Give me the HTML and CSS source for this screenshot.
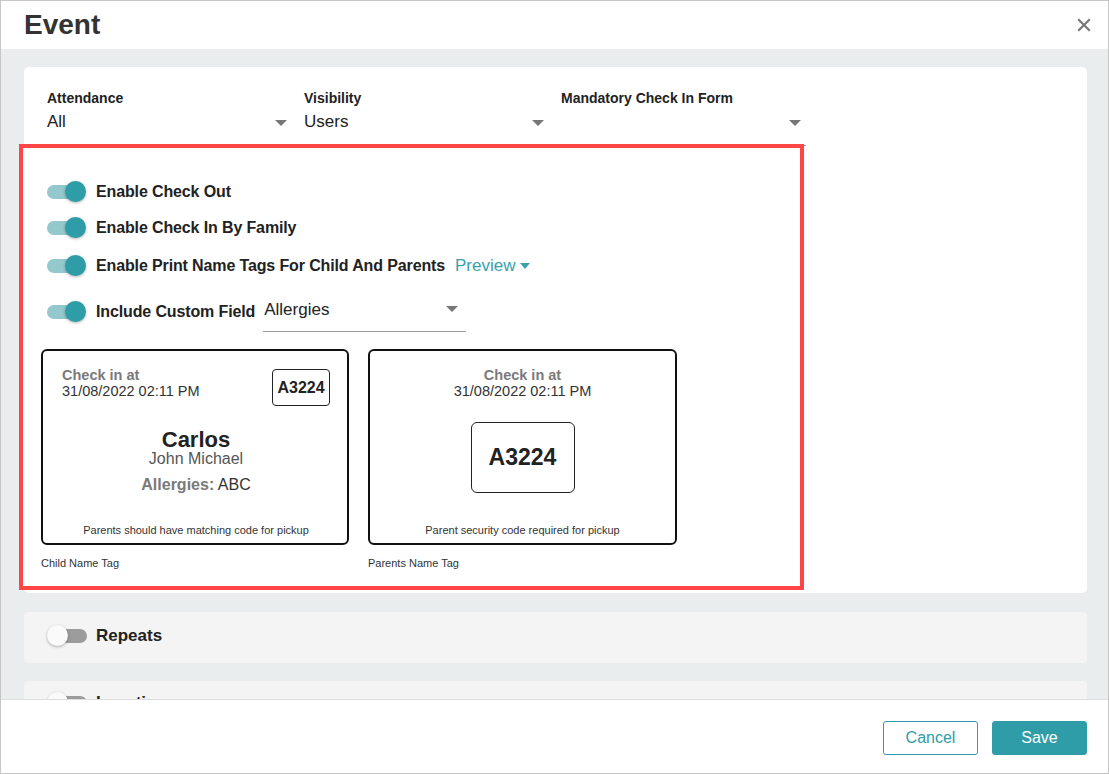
FILE: index.html
```html
<!DOCTYPE html>
<html lang="en">
	<head>
		<meta charset="utf-8"/>
		<title>Event</title>
		<link rel="stylesheet" href="styles.css">
	</head>
	<body>
		<div class="modal">
			<div class="modal-head">
				<h1>Event</h1>
				<svg class="close" width="14" height="14" viewBox="0 0 14 14"><path d="M2 2 L12 12 M12 2 L2 12" stroke="#777" stroke-width="2.2" stroke-linecap="square"/></svg>
			</div>
			<div class="modal-body">
				<div class="card">
					<div class="selects">
						<div class="select">
							<div class="select-label">Attendance</div>
							<div class="select-value">All</div>
							<span class="arrow"></span>
						</div>
						<div class="select">
							<div class="select-label">Visibility</div>
							<div class="select-value">Users</div>
							<span class="arrow"></span>
						</div>
						<div class="select">
							<div class="select-label">Mandatory Check In Form</div>
							<div class="select-value">&nbsp;</div>
							<span class="arrow"></span>
						</div>
					</div>
					<div class="highlight">
						<div class="row">
							<span class="toggle on"><span class="track"></span><span class="thumb"></span></span>
							<span class="row-label">Enable Check Out</span>
						</div>
						<div class="row">
							<span class="toggle on"><span class="track"></span><span class="thumb"></span></span>
							<span class="row-label">Enable Check In By Family</span>
						</div>
						<div class="row row3">
							<span class="toggle on"><span class="track"></span><span class="thumb"></span></span>
							<span class="row-label">Enable Print Name Tags For Child And Parents</span>
							<span class="preview">Preview <span class="preview-arrow"></span></span>
						</div>
						<div class="row row4">
							<span class="toggle on"><span class="track"></span><span class="thumb"></span></span>
							<span class="row-label">Include Custom Field</span>
							<div class="custom-select">
								<span>Allergies</span>
								<span class="arrow"></span>
							</div>
						</div>
						<div class="tags">
							<div class="tag-col">
								<div class="tag child-tag">
									<div class="tag-top">
										<div>
											<div class="checkin">Check in at</div>
											<div class="date">31/08/2022 02:11 PM</div>
										</div>
										<div class="badge-small">A3224</div>
									</div>
									<div class="name">Carlos</div>
									<div class="middle">John Michael</div>
									<div class="field"><b>Allergies:</b> ABC</div>
									<div class="tag-foot">Parents should have matching code for pickup</div>
								</div>
								<div class="caption">Child Name Tag</div>
							</div>
							<div class="tag-col">
								<div class="tag parent-tag">
									<div class="checkin">Check in at</div>
									<div class="date">31/08/2022 02:11 PM</div>
									<div class="badge-big">A3224</div>
									<div class="tag-foot">Parent security code required for pickup</div>
								</div>
								<div class="caption">Parents Name Tag</div>
							</div>
						</div>
					</div>
				</div>
				<div class="panel">
					<span class="toggle off"><span class="track"></span><span class="thumb"></span></span>
					<span class="panel-label">Repeats</span>
				</div>
				<div class="panel">
					<span class="toggle off"><span class="track"></span><span class="thumb"></span></span>
					<span class="panel-label">Location</span>
				</div>
			</div>
			<div class="modal-foot">
				<button class="btn btn-cancel">Cancel</button>
				<button class="btn btn-save">Save</button>
			</div>
		</div>
	</body>
</html>
```

FILE: styles.css
```css
html, body {
	margin: 0;
	padding: 0;
}
body {
	font-family: "Liberation Sans", Arial, sans-serif;
	color: #222;
	background: #fff;
}
.modal {
	width: 1109px;
	height: 774px;
	box-sizing: border-box;
	border: 1px solid #c6c6c6;
	display: flex;
	flex-direction: column;
	overflow: hidden;
}
.modal-head {
	height: 48px;
	flex: none;
	display: flex;
	align-items: center;
	justify-content: space-between;
	padding: 0 17px 0 23px;
}
.modal-head h1 {
	margin: 0;
	font-size: 28px;
	font-weight: bold;
	color: #333;
	line-height: 48px;
}
.close {
	display: block;
}
.modal-body {
	flex: 1;
	overflow: hidden;
	background: #e9edee;
	padding: 18px 21px 0 23px;
}
.card {
	background: #fff;
	border-radius: 5px;
	padding: 21px 23px 3px 23px;
}
.selects {
	display: flex;
	gap: 12px;
}
.select {
	position: relative;
	width: 245px;
	border-bottom: 1px solid #9a9a9a;
	padding-bottom: 9px;
}
.select-label {
	font-size: 14px;
	font-weight: bold;
	line-height: 20px;
	color: #222;
}
.select-value {
	font-size: 17px;
	line-height: 28px;
	color: #222;
}
.arrow {
	position: absolute;
	right: 5px;
	bottom: 19px;
	width: 0;
	height: 0;
	border-left: 6px solid transparent;
	border-right: 6px solid transparent;
	border-top: 6px solid #777;
}
.highlight {
	position: relative;
	margin: -2px 0 0 -28px;
	width: 785px;
	height: 446px;
	box-sizing: border-box;
	border: 4px solid #ff4646;
	padding-top: 26px;
	background: #fff;
}
.row {
	height: 36px;
	display: flex;
	align-items: center;
	padding-left: 24px;
}
.row3 {
	height: 40px;
}
.row4 {
	height: 51px;
}
.toggle {
	position: relative;
	display: inline-block;
	width: 40px;
	height: 22px;
	flex: none;
}
.track {
	position: absolute;
	left: 0;
	top: 4px;
	width: 36px;
	height: 14px;
	border-radius: 7px;
}
.thumb {
	position: absolute;
	top: 0;
	width: 21px;
	height: 21px;
	border-radius: 50%;
	box-shadow: 0 1px 3px rgba(0,0,0,0.3);
}
.toggle.on .track {
	background: #93c8cd;
}
.toggle.on .thumb {
	left: 18px;
	background: #2e9da7;
}
.toggle.off .track {
	background: #9c9c9c;
	left: 4px;
}
.toggle.off .thumb {
	left: 0;
	background: #fafafa;
}
.row-label {
	margin-left: 9px;
	font-size: 16px;
	font-weight: bold;
	letter-spacing: -0.13px;
	color: #222;
}
.preview {
	margin-left: 10px;
	font-size: 17px;
	color: #3aa1aa;
	display: inline-flex;
	align-items: center;
}
.preview-arrow {
	display: inline-block;
	margin-left: 5px;
	width: 0;
	height: 0;
	border-left: 5px solid transparent;
	border-right: 5px solid transparent;
	border-top: 6px solid #3aa1aa;
}
.custom-select {
	position: relative;
	margin-left: 8px;
	width: 202px;
	border-bottom: 1px solid #9a9a9a;
	padding: 2px 0 9px 1px;
	font-size: 17px;
	line-height: 24px;
	margin-top: 4px;
}
.custom-select .arrow {
	right: 8px;
	bottom: 19px;
}
.tags {
	display: flex;
	gap: 19px;
	margin: 12px 0 0 18px;
}
.tag {
	box-sizing: border-box;
	height: 196px;
	border: 2px solid #111;
	border-radius: 6px;
	display: flex;
	flex-direction: column;
}
.child-tag {
	width: 308px;
	padding: 16px 17px 6px 19px;
}
.parent-tag {
	width: 309px;
	padding: 16px 10px 6px 10px;
	align-items: center;
}
.tag-top {
	display: flex;
	justify-content: space-between;
	align-items: flex-start;
}
.checkin {
	font-size: 14.5px;
	font-weight: bold;
	color: #7a7a7a;
	line-height: 16px;
}
.date {
	font-size: 14.5px;
	color: #333;
	line-height: 16px;
}
.badge-small {
	margin-top: 2px;
	width: 56px;
	height: 35px;
	border: 1px solid #222;
	border-radius: 4px;
	display: flex;
	align-items: center;
	justify-content: center;
	font-size: 16px;
	font-weight: bold;
	color: #222;
}
.name {
	margin-top: 22px;
	text-align: center;
	font-size: 22px;
	font-weight: bold;
	line-height: 24px;
	color: #222;
}
.middle {
	margin-top: -1px;
	text-align: center;
	font-size: 16px;
	line-height: 16px;
	color: #555;
}
.field {
	margin-top: 8px;
	text-align: center;
	font-size: 16px;
	line-height: 20px;
	color: #333;
}
.field b {
	color: #7a7a7a;
}
.badge-big {
	margin-top: 23px;
	width: 102px;
	height: 69px;
	border: 1px solid #222;
	border-radius: 6px;
	display: flex;
	align-items: center;
	justify-content: center;
	font-size: 23px;
	font-weight: bold;
	color: #222;
}
.tag-foot {
	margin-top: auto;
	text-align: center;
	font-size: 11px;
	line-height: 14px;
	color: #333;
}
.caption {
	margin-top: 11px;
	font-size: 11px;
	line-height: 14px;
	color: #333;
}
.panel {
	margin-top: 19px;
	height: 51px;
	box-sizing: border-box;
	padding: 0 0 3px 23px;
	background: #f4f4f4;
	border-radius: 4px;
	display: flex;
	align-items: center;
}
.panel + .panel {
	margin-top: 18px;
	padding-bottom: 8px;
}
.panel-label {
	margin-left: 9px;
	font-size: 17px;
	font-weight: bold;
	color: #222;
}
.modal-foot {
	height: 74px;
	box-sizing: border-box;
	flex: none;
	border-top: 1px solid #dedede;
	display: flex;
	justify-content: flex-end;
	align-items: center;
	gap: 14px;
	padding: 2px 21px 0 0;
	background: #fff;
}
.btn {
	width: 95px;
	height: 34px;
	border-radius: 3px;
	font-family: "Liberation Sans", Arial, sans-serif;
	font-size: 16px;
	cursor: pointer;
}
.btn-cancel {
	background: #fff;
	border: 1px solid #2e9da7;
	color: #2e9da7;
}
.btn-save {
	background: #2e9da7;
	border: 1px solid #2e9da7;
	color: #fff;
}
```
